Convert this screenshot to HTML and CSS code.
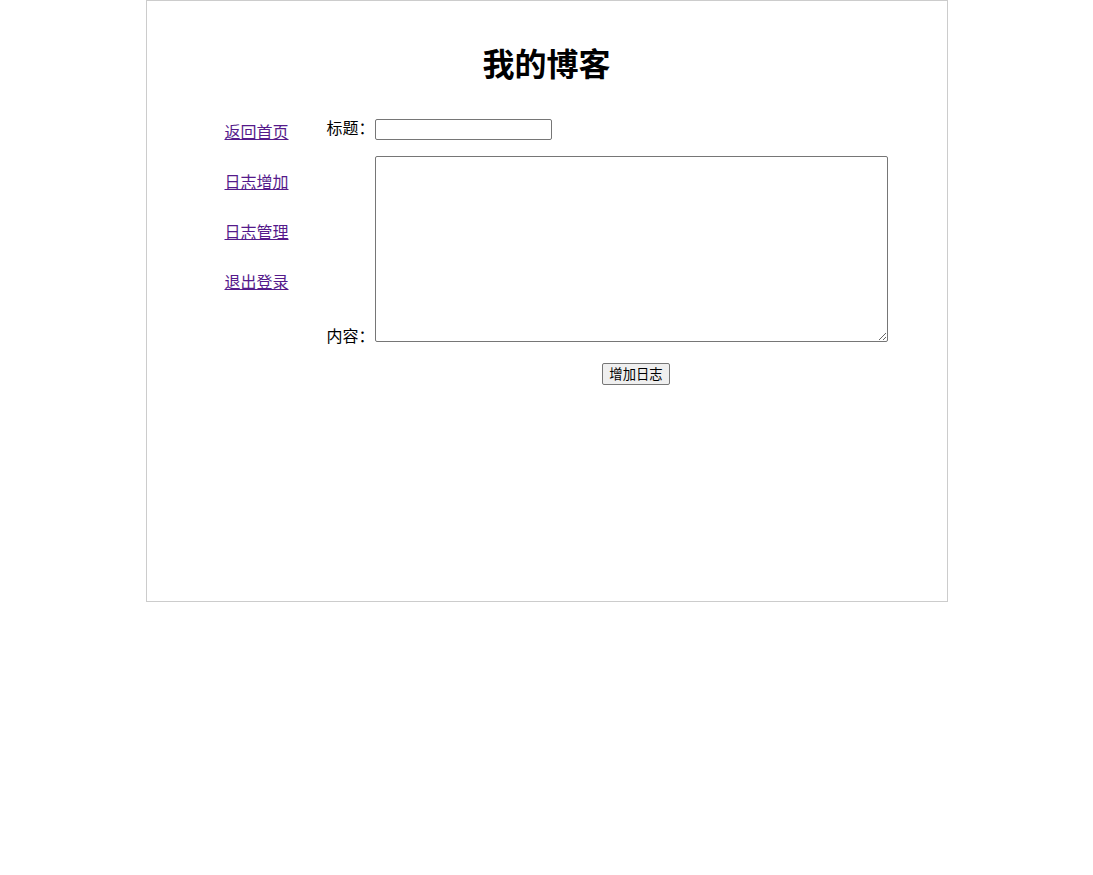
FILE: index.html
```html
<!DOCTYPE html>
<html lang="zh">
<head>
<meta charset="utf-8">
<title>我的博客</title>
<link rel="stylesheet" href="styles.css">
</head>
<body>
<div class="page">
  <h1 class="title">我的博客</h1>
  <div class="main">
    <nav class="nav">
      <a href="#" class="nav-link">返回首页</a>
      <a href="#" class="nav-link">日志增加</a>
      <a href="#" class="nav-link">日志管理</a>
      <a href="#" class="nav-link">退出登录</a>
    </nav>
    <form class="form">
      <div class="row row-title">
        <label class="label label-title">标题：</label>
        <input type="text" class="input-title">
      </div>
      <div class="row row-content">
        <label class="label label-content">内容：</label>
        <textarea class="input-content"></textarea>
      </div>
      <div class="row-submit">
        <button type="button" class="btn">增加日志</button>
      </div>
    </form>
  </div>
</div>
</body>
</html>
```

FILE: styles.css
```css
html, body {
  margin: 0;
  padding: 0;
  background: #fff;
}
body {
  font-family: "Noto Sans CJK SC", "Liberation Sans", sans-serif;
  font-size: 16px;
  color: #000;
}
.page {
  width: 800px;
  height: 600px;
  margin: 0 auto;
  border: 1px solid #ccc;
}
.title {
  margin: 43px 0 0;
  font-size: 32px;
  line-height: 37px;
  font-weight: bold;
  text-align: center;
}
.main {
  display: flex;
  margin-top: 38px;
}
.nav {
  width: 102px;
  padding-left: 78px;
  display: flex;
  flex-direction: column;
  gap: 26px;
  padding-top: 0;
}
.nav-link {
  display: block;
  line-height: 24px;
  font-size: 16px;
  color: #551a8b;
  text-decoration: underline;
  white-space: nowrap;
}
.form {
  width: 619px;
  margin: 0;
}
.row {
  display: flex;
}
.row-title {
  align-items: center;
  height: 21px;
}
.label {
  width: 48px;
  line-height: 24px;
  text-align: right;
  white-space: nowrap;
}
.label-title {
  margin-bottom: 5px;
}
.input-title {
  width: 177px;
  height: 21px;
  box-sizing: border-box;
  margin: 0;
  border: 1px solid #767676;
  border-radius: 2px;
  padding: 1px 2px;
  font-size: 13.333px;
}
.row-content {
  margin-top: 16px;
  align-items: flex-end;
}
.label-content {
  margin-bottom: -5px;
}
.input-content {
  width: 513px;
  height: 186px;
  box-sizing: border-box;
  margin: 0;
  border: 1px solid #767676;
  border-radius: 2px;
  resize: both;
  font-size: 13.333px;
}
.row-submit {
  display: flex;
  justify-content: center;
  margin-top: 21px;
}
.btn {
  height: 22px;
  padding: 0 6px;
  font-family: "Noto Sans CJK SC", "Liberation Sans", sans-serif;
  font-size: 13.333px;
  line-height: 18px;
  color: #000;
  background: #efefef;
  border: 1px solid #767676;
  border-radius: 2px;
}
```
